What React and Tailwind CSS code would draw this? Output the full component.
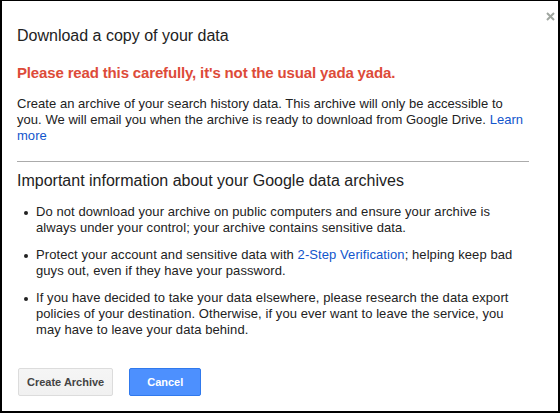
export default function App() {
  const font = { fontFamily: '"Liberation Sans", Arial, sans-serif' };
  return (
    <div
      className="w-[560px] h-[413px] bg-white border-black border-t border-l-2 border-r-2 border-b-2 relative text-[#222]"
      style={font}
    >
      <button className="absolute right-[2px] top-[9px] w-[12px] h-[12px] flex items-center justify-center">
        <svg width="9" height="9" viewBox="0 0 9 9">
          <path d="M1 1L8 8M8 1L1 8" stroke="#a0a6a0" strokeWidth="2" />
        </svg>
      </button>

      <div className="pl-[15px] pr-[33px] pt-[25px]">
        <h1 className="text-[16px] leading-[20px] font-normal">Download a copy of your data</h1>

        <p className="mt-[19px] text-[15px] leading-[16px] font-bold text-[#dd4b39] tracking-[-0.15px]">
          Please read this carefully, it's not the usual yada yada.
        </p>

        <p className="mt-[15px] -mr-[3px] text-[13px] leading-[16px] tracking-[0.04px]">
          Create an archive of your search history data. This archive will only be accessible to
          you. We will email you when the archive is ready to download from Google Drive.{" "}
          <a className="text-[#15c]">Learn more</a>
        </p>

        <div className="mt-[17px] -mr-[4px] h-px bg-[#ababab]" />

        <h2 className="mt-[9px] text-[16px] leading-[20px] font-normal">
          Important information about your Google data archives
        </h2>

        <ul className="mt-[13px] text-[13px] leading-[16px] tracking-[0.08px] flex flex-col gap-[11px]">
          <li className="flex">
            <span className="shrink-0 w-[4px] h-[4px] rounded-full bg-[#222] ml-[7px] mr-[8px] mt-[7px]" />
            <span>
              Do not download your archive on public computers and ensure your archive is always
              under your control; your archive contains sensitive data.
            </span>
          </li>
          <li className="flex">
            <span className="shrink-0 w-[4px] h-[4px] rounded-full bg-[#222] ml-[7px] mr-[8px] mt-[7px]" />
            <span>
              Protect your account and sensitive data with{" "}
              <a className="text-[#15c]">2-Step Verification</a>; helping keep bad guys out, even if
              they have your password.
            </span>
          </li>
          <li className="flex">
            <span className="shrink-0 w-[4px] h-[4px] rounded-full bg-[#222] ml-[7px] mr-[8px] mt-[7px]" />
            <span>
              If you have decided to take your data elsewhere, please research the data export
              policies of your destination. Otherwise, if you ever want to leave the service, you
              may have to leave your data behind.
            </span>
          </li>
        </ul>

        <div className="mt-[30px] ml-px flex gap-[16px]">
          <button className="h-[28px] px-[8px] border border-[#dcdcdc] bg-gradient-to-b from-[#f5f5f5] to-[#f1f1f1] rounded-[2px] text-[11px] font-bold text-[#444]">
            Create Archive
          </button>
          <button className="h-[28px] w-[72px] border border-[#3079ed] bg-[#4d90fe] rounded-[2px] text-[11px] font-bold text-white">
            Cancel
          </button>
        </div>
      </div>
    </div>
  );
}
